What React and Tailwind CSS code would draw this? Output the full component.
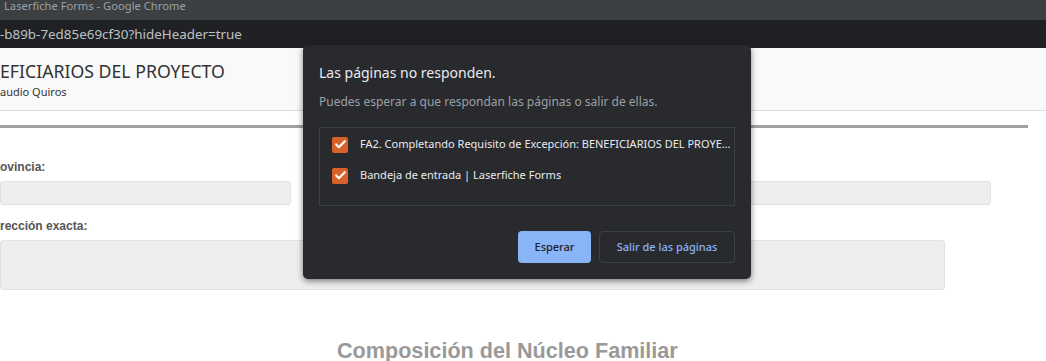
import { Check } from 'lucide-react';

const sans = { fontFamily: '"Noto Sans", "Open Sans", sans-serif' };

function PageItem({ label }) {
  return (
    <div className="flex items-center h-[31px] pl-[12px] pr-[1px]">
      <span className="w-4 h-4 shrink-0 rounded-[2px] bg-[#d9622b] flex items-center justify-center">
        <Check size={13} strokeWidth={4} className="text-white" />
      </span>
      <span className="ml-[12px] text-[11px] text-[#e8eaed] truncate">{label}</span>
    </div>
  );
}

export default function App() {
  return (
    <div className="relative w-[1046px] h-[361px] overflow-hidden bg-white" style={sans}>
      {/* window title */}
      <div className="h-[20px] bg-[#3c4043] pl-[4px] text-[11.2px] leading-[12px] text-[#9aa0a6]">
        Laserfiche Forms - Google Chrome
      </div>
      {/* address bar */}
      <div className="h-[28px] bg-[#202124] flex items-center text-[13.4px] text-[#bdc1c6]">
        -b89b-7ed85e69cf30?hideHeader=true
      </div>

      {/* form header */}
      <div className="h-[63px] bg-[#f9f9f9] border-b border-[#dddddd] pt-[11px]">
        <div className="text-[17.7px] leading-[24px] text-[#333333]">EFICIARIOS DEL PROYECTO</div>
        <div className="text-[11px] leading-[16px] mt-[1px] text-[#333333]">audio Quiros</div>
      </div>

      {/* form body */}
      <div style={{ fontFamily: '"Liberation Sans", Arial, sans-serif' }}>
        <div className="mt-[14px] w-[1028px] h-[3px] bg-[#a0a0a0]" />
        <div className="mt-[32px] text-[12px] leading-[14px] font-bold text-[#555555]">ovincia:</div>
        <div className="mt-[7px] flex gap-[20px]">
          <div className="w-[291px] h-[24px] bg-[#eeeeee] border border-[#e2e2e2] rounded-[3px]" />
          <div className="w-[680px] h-[24px] bg-[#eeeeee] border border-[#e2e2e2] rounded-[3px]" />
        </div>
        <div className="mt-[14px] text-[12px] leading-[14px] font-bold text-[#555555]">rección exacta:</div>
        <div className="mt-[7px] w-[945px] h-[50px] bg-[#eeeeee] border border-[#e2e2e2] rounded-[3px]" />
        <div className="mt-[49px] ml-[337px] text-[21.6px] leading-[24px] font-bold text-[#999999]">
          Composición del Núcleo Familiar
        </div>
      </div>

      {/* hung pages dialog */}
      <div className="absolute left-[303px] top-[45px] w-[448px] rounded-[5px] bg-[#292a2d] px-[16px] pt-[18px] pb-[16px] shadow-[0_2px_6px_rgba(0,0,0,0.5)]">
        <div className="text-[14px] leading-[20px] text-[#e8eaed]">Las páginas no responden.</div>
        <div className="mt-[10px] text-[12px] leading-[18px] text-[#9aa0a6]">
          Puedes esperar a que respondan las páginas o salir de ellas.
        </div>
        <div className="mt-[16px] h-[79px] border border-[#3c4043] pt-[1px]">
          <PageItem label="FA2. Completando Requisito de Excepción: BENEFICIARIOS DEL PROYECTO" />
          <PageItem label="Bandeja de entrada | Laserfiche Forms" />
        </div>
        <div className="mt-[25px] flex justify-end gap-[8px]">
          <button className="w-[73px] h-[32px] rounded-[4px] bg-[#8ab4f8] text-[11px] font-medium text-[#202124]">
            Esperar
          </button>
          <button className="w-[136px] h-[32px] rounded-[4px] border border-[#3c4043] text-[11px] font-medium text-[#8ab4f8]">
            Salir de las páginas
          </button>
        </div>
      </div>
    </div>
  );
}
